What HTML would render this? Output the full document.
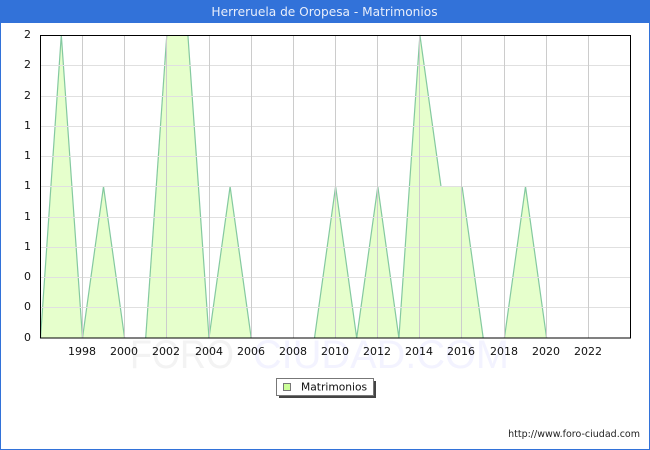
<!DOCTYPE html>
<html><head><meta charset="utf-8"><style>
html,body{margin:0;padding:0;background:#fff}
svg{display:block}
text{font-family:"DejaVu Sans",sans-serif}
</style></head><body>
<svg width="650" height="450" viewBox="0 0 650 450" xmlns="http://www.w3.org/2000/svg">
<rect width="650" height="450" fill="#fff"/>
<rect x="0.5" y="0.5" width="649" height="449" fill="none" stroke="#3272d9"/>
<rect x="0" y="0" width="1" height="450" fill="#3272d9"/>
<rect width="650" height="23" fill="#3272d9"/>
<text x="324.5" y="16" font-size="12.2" fill="#e8eefb" text-anchor="middle">Herreruela de Oropesa - Matrimonios</text>
<text x="130" y="368" font-size="40" fill="#f3f3f3" textLength="104" lengthAdjust="spacingAndGlyphs" style="font-family:'Liberation Sans',sans-serif">FORO</text>
<text x="253" y="368" font-size="40" fill="#f3f3ff" textLength="256" lengthAdjust="spacingAndGlyphs" style="font-family:'Liberation Sans',sans-serif">CIUDAD.COM</text>
<rect x="40" y="35" width="590" height="303" fill="#fff"/>
<polygon fill="#e6ffcc" points="40.5,338 61.3,35 82.5,338 103.5,186.5 124.6,338 145.7,338 166.8,35 187.9,35 209,338 230.1,186.5 251.2,338 314.5,338 335.6,186.5 356.7,338 377.8,186.5 398.9,338 419.9,35 441,186.5 462.1,186.5 483.2,338 504.4,338 525.5,186.5 546.6,338"/>
<g fill="none" stroke="#84c9a0" stroke-width="1.2">
<polyline points="40.5,338 61.3,35 82.5,338 103.5,186.5 124.6,338"/>
<polyline points="145.7,338 166.8,35"/>
<polyline points="187.9,35 209,338 230.1,186.5 251.2,338"/>
<polyline points="314.5,338 335.6,186.5 356.7,338 377.8,186.5 398.9,338 419.9,35 441,186.5"/>
<polyline points="462.1,186.5 483.2,338"/>
<polyline points="504.4,338 525.5,186.5 546.6,338"/>
</g>
<g stroke="#e0e0e0" stroke-width="1" shape-rendering="crispEdges">
<path d="M41 65.5H630M41 96.5H630M41 126.5H630M41 156.5H630M41 186.5H630M41 217.5H630M41 247.5H630M41 277.5H630M41 307.5H630" fill="none"/>
</g>
<g stroke="#cccccc" stroke-width="1" shape-rendering="crispEdges">
<path d="M82.5 36V338M124.5 36V338M166.5 36V338M209.5 36V338M251.5 36V338M293.5 36V338M335.5 36V338M377.5 36V338M419.5 36V338M461.5 36V338M504.5 36V338M546.5 36V338M588.5 36V338" fill="none"/>
</g>
<rect x="40.5" y="35.5" width="590" height="302.5" fill="none" stroke="#000" shape-rendering="crispEdges"/>
<g font-size="11" fill="#111" text-anchor="end">
<text x="31" y="38">2</text><text x="31" y="68">2</text><text x="31" y="99">2</text><text x="31" y="129">1</text><text x="31" y="159">1</text><text x="31" y="189">1</text><text x="31" y="220">1</text><text x="31" y="250">1</text><text x="31" y="280">0</text><text x="31" y="310">0</text><text x="31" y="341">0</text>
</g>
<g font-size="11" fill="#111" text-anchor="middle">
<text x="82" y="355">1998</text><text x="124" y="355">2000</text><text x="166" y="355">2002</text><text x="209" y="355">2004</text><text x="251" y="355">2006</text><text x="293" y="355">2008</text><text x="335" y="355">2010</text><text x="377" y="355">2012</text><text x="419" y="355">2014</text><text x="461" y="355">2016</text><text x="504" y="355">2018</text><text x="546" y="355">2020</text><text x="588" y="355">2022</text>
</g>
<rect x="279" y="381" width="97" height="17" fill="#444"/>
<rect x="276.5" y="378.5" width="97" height="17" fill="#fff" stroke="#777" shape-rendering="crispEdges"/>
<rect x="283.5" y="383.5" width="7" height="7" fill="#ccff99" stroke="#777" shape-rendering="crispEdges"/>
<text x="301" y="390.5" font-size="10.7" fill="#111">Matrimonios</text>
<text x="640" y="437" font-size="9.5" fill="#222" text-anchor="end">http://www.foro-ciudad.com</text>
</svg>
</body></html>
